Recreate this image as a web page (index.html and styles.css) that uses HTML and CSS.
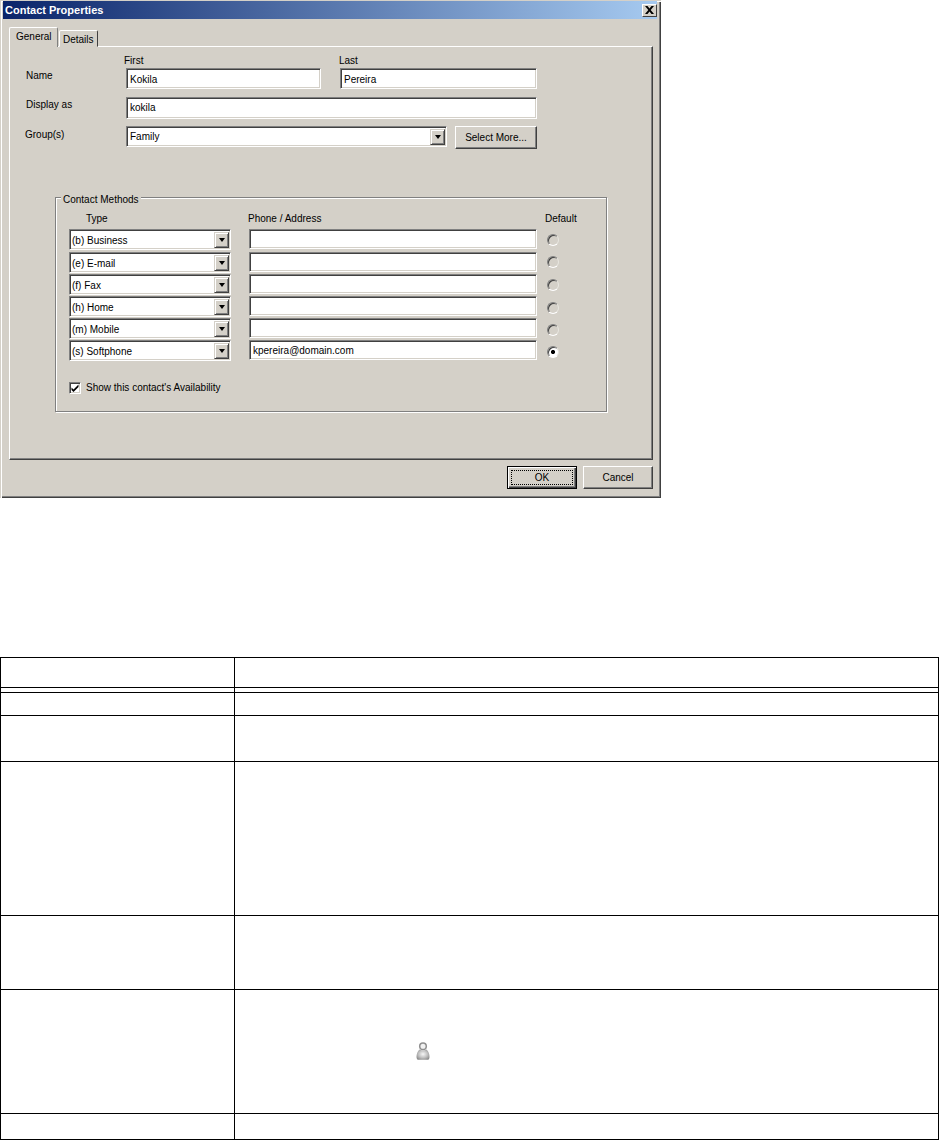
FILE: index.html
```html
<!DOCTYPE html>
<html lang="en">
<head>
<meta charset="utf-8">
<title>Contact Properties</title>
<link rel="stylesheet" href="styles.css">
</head>
<body>
<div class="dialog">
  <div class="titlebar">
    <span class="title">Contact Properties</span>
    <span class="close"><svg width="9" height="8" viewBox="0 0 9 8"><path d="M0 0h2.500l2 2.500 2-2.500H9L5.700 4 9 8H6.500l-2-2.500-2 2.500H0l3.300-4z" fill="#000"/></svg></span>
  </div>
  <div class="tabs">
    <span class="tab tab-active">General</span>
    <span class="tab">Details</span>
  </div>
  <div class="pane">
    <div class="name-grid">
      <span></span>
      <span class="head head-first">First</span>
      <span class="head head-last">Last</span>
    </div>
    <div class="row row-name">
      <span class="label">Name</span>
      <span class="field field-first">Kokila</span>
      <span class="field field-last">Pereira</span>
    </div>
    <div class="row row-display">
      <span class="label">Display as</span>
      <span class="field field-wide">kokila</span>
    </div>
    <div class="row row-group">
      <span class="label label-group">Group(s)</span>
      <span class="combo combo-group">Family<span class="drop"><i class="arrow"></i></span></span>
      <span class="btn btn-more">Select More...</span>
    </div>
    <div class="methods">
      <span class="legend">Contact Methods</span>
      <div class="methods-head">
        <span class="mh-type">Type</span>
        <span class="mh-phone">Phone / Address</span>
        <span class="mh-default">Default</span>
      </div>
      <div class="method-list">
        <div class="method m-first"><span class="combo combo-type">(b) Business<span class="drop"><i class="arrow"></i></span></span><span class="field field-phone"></span><span class="radio"></span></div>
        <div class="method"><span class="combo combo-type">(e) E-mail<span class="drop"><i class="arrow"></i></span></span><span class="field field-phone"></span><span class="radio radio-up"></span></div>
        <div class="method"><span class="combo combo-type">(f) Fax<span class="drop"><i class="arrow"></i></span></span><span class="field field-phone"></span><span class="radio"></span></div>
        <div class="method"><span class="combo combo-type">(h) Home<span class="drop"><i class="arrow"></i></span></span><span class="field field-phone"></span><span class="radio radio-down"></span></div>
        <div class="method"><span class="combo combo-type">(m) Mobile<span class="drop"><i class="arrow"></i></span></span><span class="field field-phone"></span><span class="radio radio-down"></span></div>
        <div class="method"><span class="combo combo-type">(s) Softphone<span class="drop"><i class="arrow"></i></span></span><span class="field field-phone">kpereira@domain.com</span><span class="radio radio-down radio-on"></span></div>
      </div>
      <div class="avail">
        <span class="check"><svg width="8" height="8" viewBox="0 0 8 8"><path d="M0.500 3.500l2 2L7.500 0.500v2.500L2.500 8 0.500 6z" fill="#000"/></svg></span>
        <span>Show this contact's Availability</span>
      </div>
    </div>
  </div>
  <div class="actions">
    <span class="btn btn-ok"><span class="focus">OK</span></span>
    <span class="btn btn-cancel">Cancel</span>
  </div>
</div>

<table class="spec">
  <tr class="r1"><td class="c1"></td><td></td></tr>
  <tr class="r2"><td class="c1"></td><td></td></tr>
  <tr class="r3"><td class="c1"></td><td></td></tr>
  <tr class="r4"><td class="c1"></td><td></td></tr>
  <tr class="r5"><td class="c1"></td><td></td></tr>
  <tr class="r6"><td class="c1"></td><td></td></tr>
  <tr class="r7"><td class="c1"></td><td class="icon-cell">
    <svg class="person" width="14" height="18" viewBox="0 0 14 18">
      <defs>
        <radialGradient id="body" cx="50%" cy="45%" r="62%"><stop offset="0" stop-color="#f6f6f6"/><stop offset=".55" stop-color="#c2c2c2"/><stop offset="1" stop-color="#8a8a8a"/></radialGradient>
      </defs>
      <circle cx="7" cy="4.300" r="3.300" fill="#f2f2f2" stroke="#8f8f8f" stroke-width="1.500"/>
      <path d="M3.500 7.500C1.500 9.500 .5 11.500 .5 15c0 2 1 2.800 2 2.800h9c1 0 2-.8 2-2.800 0-3.500-1-5.500-3-7.500-1 1-6 1-7 0z" fill="url(#body)"/>
    </svg>
  </td></tr>
  <tr class="r8"><td class="c1"></td><td></td></tr>
</table>
</body>
</html>
```
FILE: styles.css
```css
* { box-sizing: border-box; }
html, body { margin: 0; padding: 0; background: #fff; }
body { font-family: "Liberation Sans", Arial, sans-serif; font-size: 10px; color: #000; width: 939px; height: 1140px; overflow: hidden; }

.dialog {
  width: 661px; height: 498px; background: #d4d0c8;
  padding: 1px 0 0 3px;
  box-shadow: inset 1px 1px 0 #d4d0c8, inset 2px 2px 0 #fff, inset -1px -1px 0 #404040, inset -2px -2px 0 #808080;
  display: flex; flex-direction: column;
}
.titlebar {
  width: 654px; height: 18px; flex: none;
  background: linear-gradient(90deg, #0a246a, #a6caf0);
  display: flex; align-items: center; justify-content: space-between;
  padding: 0 0 0 2px;
}
.title { color: #fff; font-weight: bold; font-size: 11px; }
.close {
  width: 15px; height: 13px; background: #d4d0c8;
  border: 1px solid; border-color: #fff #404040 #404040 #fff;
  display: flex; align-items: center; justify-content: center;
}

.tabs { display: flex; align-items: flex-end; height: 20px; margin: 8px 0 -1px 6px; position: relative; z-index: 1; }
.tab {
  height: 17px; background: #d4d0c8; padding: 2px 0 0 3px;
  border: 1px solid; border-color: #fff #404040 transparent #fff;
  border-radius: 2px 2px 0 0; margin-left: 1px; width: 39px; line-height: 13px;
}
.tab-active { height: 20px; width: 49px; margin-left: 0; padding: 2px 0 0 6px; border-bottom: 0; box-shadow: inset -1px 0 0 #d4d0c8; border-right-color: #808080; }

.pane {
  width: 644px; height: 414px; margin-left: 6px; flex: none;
  border: 1px solid; border-color: #fff #404040 #404040 #fff;
  box-shadow: inset -1px -1px 0 #808080;
  padding: 7px 0 0 16px;
}
.name-grid { display: grid; grid-template-columns: 98px 215px auto; height: 14px; line-height: 13px; }
.row { display: flex; align-items: flex-start; }
.label { width: 100px; flex: none; line-height: 13px; margin-top: 1px; }
.row-name { height: 29px; }
.row-display { height: 29px; }
.row-group { height: 22px; }
.label-group { margin: 2px 0 0 -1px; width: 101px; }

.field, .combo {
  background: #fff; display: block; position: relative; flex: none;
  border: 1px solid; border-color: #808080 #fff #fff #808080;
  box-shadow: inset 1px 1px 0 #404040, inset -1px -1px 0 #d4d0c8;
  padding: 0 0 0 3px; white-space: nowrap;
}
.field-first { width: 195px; height: 21px; line-height: 21px; margin-right: 19px; }
.field-last { width: 197px; height: 21px; line-height: 21px; }
.field-wide { width: 411px; height: 22px; line-height: 20px; }
.combo-group { width: 321px; height: 21px; line-height: 19px; margin-right: 8px; }
.drop {
  position: absolute; right: 1px; top: 2px; width: 15px; height: 16px; background: #d4d0c8;
  border: 1px solid; border-color: #d4d0c8 #404040 #404040 #d4d0c8;
  box-shadow: inset 1px 1px 0 #fff, inset -1px -1px 0 #808080;
  display: flex; align-items: center; justify-content: center;
}
.arrow { width: 0; height: 0; border-style: solid; border-width: 4px 3.5px 0; border-color: #000 transparent transparent; }
.btn {
  display: flex; align-items: center; justify-content: center; background: #d4d0c8; flex: none;
  border: 1px solid; border-color: #fff #404040 #404040 #fff;
  box-shadow: inset -1px -1px 0 #808080;
}
.btn-more { width: 82px; height: 23px; }

.methods {
  position: relative; width: 552px; height: 215px; margin: 49px 0 0 29px;
  border: 1px solid #808080;
  box-shadow: 1px 1px 0 #fff, inset 1px 1px 0 #fff;
  padding: 14px 0 0 13px;
}
.legend { position: absolute; left: 5px; top: -5px; background: #d4d0c8; padding: 0 2px; line-height: 13px; }
.methods-head { display: grid; grid-template-columns: 162px 314px auto; height: 17px; line-height: 13px; }
.mh-type { padding-left: 17px; }
.mh-phone { margin-left: 17px; }
.mh-default { white-space: nowrap; }
.method-list { display: flex; flex-direction: column; }
.method { display: flex; height: 22px; align-items: flex-start; }
.m-first { height: 23px; }
.combo-type { width: 162px; height: 21px; line-height: 21px; padding-left: 2px; margin-right: 18px; }
.field-phone { width: 288px; height: 20px; line-height: 20px; margin-right: 10px; }
.radio {
  width: 12px; height: 12px; border-radius: 50%; flex: none; margin-top: 5px;
  border: 1px solid; border-color: #808080 #e8e6e0 #fff #808080;
  box-shadow: inset 1px 1px 0 #404040;
}
.radio-up { margin-top: 4px; }
.radio-down { margin-top: 6px; }
.radio-on { background: radial-gradient(circle at 50% 50%, #000 0 1.7px, #fff 2.4px); }
.avail { display: flex; align-items: center; height: 13px; margin-top: 19px; gap: 5px; line-height: 13px; }
.check {
  width: 12px; height: 12px; background: #fff; display: flex; align-items: center; justify-content: center;
  border: 1px solid; border-color: #808080 #fff #fff #808080;
  box-shadow: inset 1px 1px 0 #404040, inset -1px -1px 0 #d4d0c8;
}

.actions { display: flex; gap: 6px; margin: 6px 0 0 504px; }
.btn-ok { width: 70px; height: 23px; border: 1px solid #000; box-shadow: inset 1px 1px 0 #fff, inset -1px -1px 0 #404040, inset -2px -2px 0 #808080; padding: 3px; }
.focus { display: flex; width: 100%; height: 100%; align-items: center; justify-content: center; border: 1px dotted #000; }
.btn-cancel { width: 70px; height: 23px; }

.spec { width: 939px; margin-top: 159px; border-collapse: collapse; table-layout: fixed; }
.spec td { border: 1px solid #000; padding: 0; vertical-align: top; }
.c1 { width: 234px; }
.r1 { height: 30px; }
.r2 { height: 5px; }
.r3 { height: 23px; }
.r4 { height: 46px; }
.r5 { height: 154px; }
.r6 { height: 74px; }
.r7 { height: 124px; }
.r8 { height: 26px; }
.spec .icon-cell { padding: 52px 0 0 181px; }
.person { display: block; }
```
